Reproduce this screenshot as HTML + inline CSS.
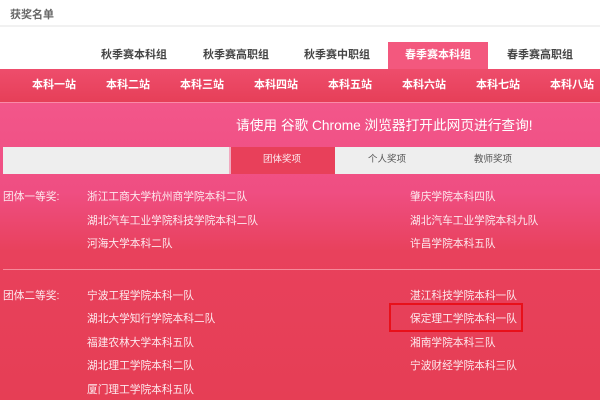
<!DOCTYPE html><html><head><meta charset="utf-8"><style>
*{margin:0;padding:0;box-sizing:border-box}
body{width:600px;height:400px;overflow:hidden;font-family:"Liberation Sans","Noto Sans CJK SC",sans-serif;background:#fff;position:relative}
.a{position:absolute;white-space:nowrap}
.top{left:0;top:0;width:600px;height:27px;background:#fff;border-bottom:2px solid #f1f1f1}
.tab{top:42px;height:27px;line-height:27px;font-size:11px;font-weight:bold;color:#444;text-align:center;width:100px}
.nav{left:0;top:69px;width:600px;height:33px;background:linear-gradient(#ee4d6c,#e63f58);}
.nv{top:69px;line-height:33px;font-size:11px;font-weight:bold;color:#fff}
.ban{left:0;top:102px;width:600px;height:298px;background:linear-gradient(180deg,#f2568a 0%,#ef4e82 30%,#e8415c 50%,#e63e55 100%);border-top:1px solid #f98aa8}
.t{font-size:10.7px;line-height:14px;color:#fde9ee}
</style></head><body>
<div class="a top"></div>
<div class="a" style="left:10px;top:6px;font-size:11px;font-weight:bold;color:#666">获奖名单</div>
<div class="a tab" style="left:84px">秋季赛本科组</div>
<div class="a tab" style="left:186px">秋季赛高职组</div>
<div class="a tab" style="left:287px">秋季赛中职组</div>
<div class="a tab" style="left:388px;background:#f3587e;color:#fff">春季赛本科组</div>
<div class="a tab" style="left:490px">春季赛高职组</div>
<div class="a nav"></div>
<div class="a nv" style="left:32px">本科一站</div>
<div class="a nv" style="left:106px">本科二站</div>
<div class="a nv" style="left:180px">本科三站</div>
<div class="a nv" style="left:254px">本科四站</div>
<div class="a nv" style="left:328px">本科五站</div>
<div class="a nv" style="left:402px">本科六站</div>
<div class="a nv" style="left:476px">本科七站</div>
<div class="a nv" style="left:550px">本科八站</div>
<div class="a ban"></div>
<div class="a" style="left:236px;top:117px;font-size:13.7px;line-height:18px;color:#fff">请使用 谷歌 Chrome 浏览器打开此网页进行查询!</div>
<div class="a" style="left:3px;top:147px;width:597px;height:27px;background:#eeeeee"></div>
<div class="a" style="left:229px;top:147px;width:2px;height:27px;background:#f1aac0"></div>
<div class="a" style="left:231px;top:147px;width:104px;height:27px;background:#e8405a"></div>
<div class="a" style="left:263px;top:153px;font-size:9.5px;line-height:14px;color:#fde9ee">团体奖项</div>
<div class="a" style="left:368px;top:153px;font-size:9.5px;line-height:14px;color:#555">个人奖项</div>
<div class="a" style="left:474px;top:153px;font-size:9.5px;line-height:14px;color:#555">教师奖项</div>
<div class="a t" style="left:3px;top:190px">团体一等奖:</div>
<div class="a t" style="left:87px;top:190px">浙江工商大学杭州商学院本科二队</div>
<div class="a t" style="left:87px;top:214px">湖北汽车工业学院科技学院本科二队</div>
<div class="a t" style="left:87px;top:237px">河海大学本科二队</div>
<div class="a t" style="left:410px;top:190px">肇庆学院本科四队</div>
<div class="a t" style="left:410px;top:214px">湖北汽车工业学院本科九队</div>
<div class="a t" style="left:410px;top:237px">许昌学院本科五队</div>
<div class="a" style="left:3px;top:269px;width:597px;height:1px;background:#f58a9a"></div>
<div class="a t" style="left:3px;top:289px">团体二等奖:</div>
<div class="a t" style="left:87px;top:289px">宁波工程学院本科一队</div>
<div class="a t" style="left:87px;top:312px">湖北大学知行学院本科二队</div>
<div class="a t" style="left:87px;top:336px">福建农林大学本科五队</div>
<div class="a t" style="left:87px;top:359px">湖北理工学院本科二队</div>
<div class="a t" style="left:87px;top:383px">厦门理工学院本科五队</div>
<div class="a t" style="left:410px;top:289px">湛江科技学院本科一队</div>
<div class="a t" style="left:410px;top:312px">保定理工学院本科一队</div>
<div class="a t" style="left:410px;top:336px">湘南学院本科三队</div>
<div class="a t" style="left:410px;top:359px">宁波财经学院本科三队</div>
<div class="a" style="left:389px;top:303px;width:134px;height:29px;border:2px solid #e8101a"></div>
</body></html>
